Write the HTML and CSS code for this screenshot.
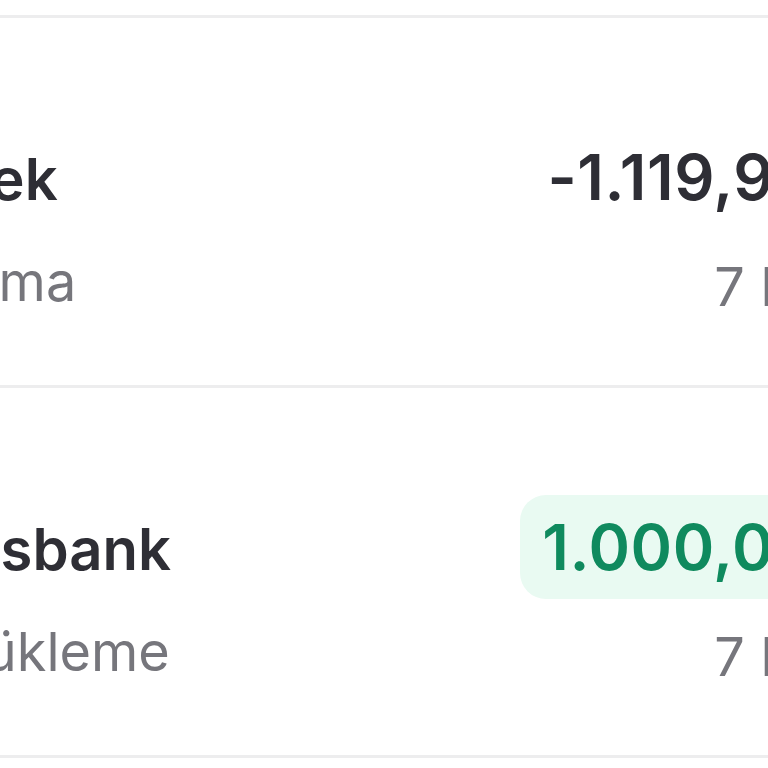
FILE: index.html
```html
<!DOCTYPE html>
<html lang="tr">
<head>
<meta charset="utf-8">
<link rel="stylesheet" href="styles.css">
</head>
<body>
<div class="viewport">
  <ul class="list">
    <li class="row">
      <div class="info">
        <div class="title">Mercek</div>
        <div class="sub">Harcama</div>
      </div>
      <div class="side">
        <div class="amount">-1.119,90 ₺</div>
        <div class="date">7 Mart</div>
      </div>
    </li>
    <li class="row">
      <div class="info">
        <div class="title">Finansbank</div>
        <div class="sub">Hat Yükleme</div>
      </div>
      <div class="side">
        <div class="amount positive">1.000,00 ₺</div>
        <div class="date">7 Mart</div>
      </div>
    </li>
  </ul>
</div>
</body>
</html>
```

FILE: styles.css
```css
html, body {
  margin: 0;
  padding: 0;
  background: #ffffff;
}
.viewport {
  width: 768px;
  height: 768px;
  overflow: hidden;
}
.list {
  list-style: none;
  margin: 15px 0 0 -153px;
  padding: 0;
  width: 1048px;
  border-top: 3px solid #ededee;
  font-family: Inter, "Noto Sans", sans-serif;
}
.row {
  display: flex;
  justify-content: space-between;
  align-items: flex-start;
  height: 370px;
  border-bottom: 3px solid #ededee;
  box-sizing: border-box;
  padding-top: 107px;
}
.info {
  display: flex;
  flex-direction: column;
}
.title {
  font-size: 58px;
  font-weight: 600;
  line-height: 64px;
  color: #2e2e35;
  margin-top: 22px;
}
.sub {
  font-size: 54px;
  line-height: 64px;
  color: #76767c;
  margin-top: 39px;
}
.side {
  display: flex;
  flex-direction: column;
  align-items: flex-end;
}
.amount {
  font-size: 63px;
  font-weight: 600;
  letter-spacing: 0.6px;
  line-height: 64px;
  color: #2e2e35;
  padding: 20px 22px;
  border-radius: 26px;
}
.amount.positive {
  color: #0f8a5e;
  background: #e9faf2;
}
.date {
  font-size: 54px;
  line-height: 64px;
  color: #76767c;
  margin-top: 26px;
  padding-right: 17px;
}
```
